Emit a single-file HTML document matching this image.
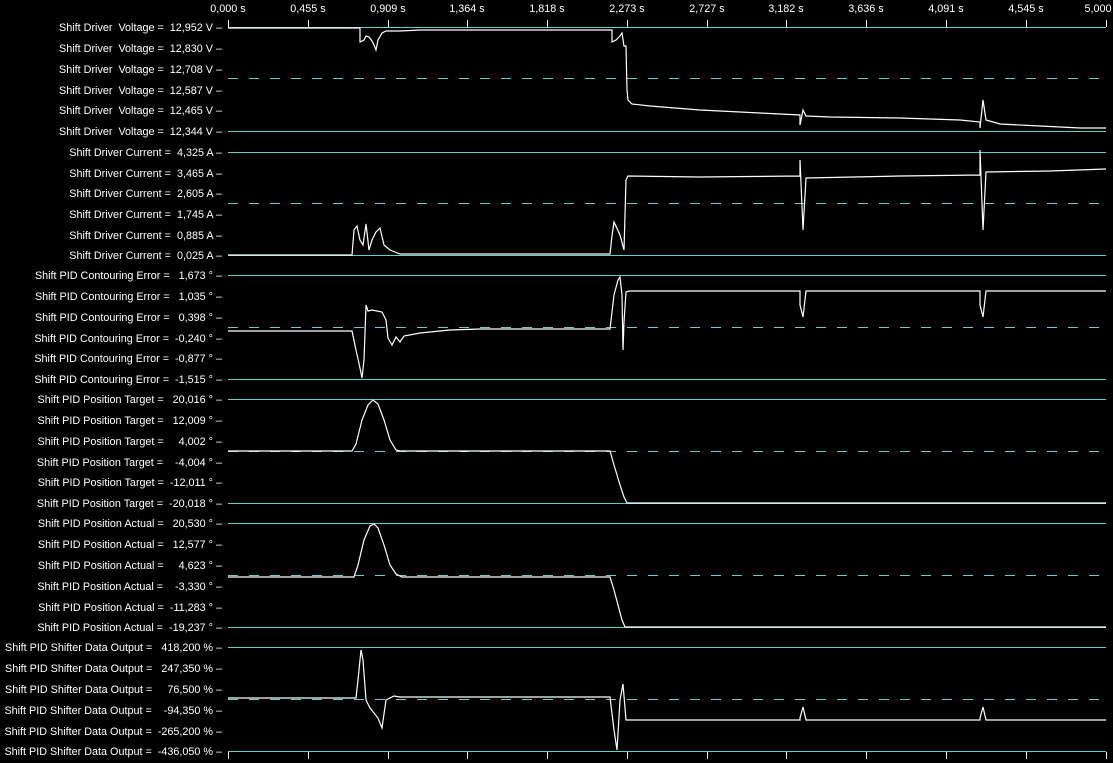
<!DOCTYPE html>
<html><head><meta charset="utf-8"><style>
html,body{margin:0;padding:0;background:#000;overflow:hidden;width:1113px;height:763px;position:relative}
svg{display:block;position:absolute;left:0;top:0}
text{font-family:"Liberation Sans",sans-serif;font-size:10.8px;fill:#fff;white-space:pre}
.l{position:absolute;left:228px;width:878px;height:1px;background:#66cccc}
.dl{position:absolute;left:228px;width:878px;height:1px;background:repeating-linear-gradient(90deg,#66cccc 0 10px,transparent 10px 21px)}
.w{stroke:#fff;stroke-width:1.2;fill:none}
.t{stroke:#fff;stroke-width:1}
</style></head><body>
<div class="l" style="top:27px"></div><div class="dl" style="top:78px"></div><div class="l" style="top:131px"></div>
<div class="l" style="top:152px"></div><div class="dl" style="top:203px"></div><div class="l" style="top:255px"></div>
<div class="l" style="top:275px"></div><div class="dl" style="top:327px"></div><div class="l" style="top:379px"></div>
<div class="l" style="top:399px"></div><div class="dl" style="top:451px"></div><div class="l" style="top:503px"></div>
<div class="l" style="top:523px"></div><div class="dl" style="top:575px"></div><div class="l" style="top:627px"></div>
<div class="l" style="top:647px"></div><div class="dl" style="top:699px"></div><div class="l" style="top:751px"></div>
<svg width="1113" height="763" viewBox="0 0 1113 763" xmlns="http://www.w3.org/2000/svg">
<g text-anchor="middle">
<text x="228" y="12">0,000 s</text><text x="308" y="12">0,455 s</text><text x="388" y="12">0,909 s</text>
<text x="467" y="12">1,364 s</text><text x="547" y="12">1,818 s</text><text x="627" y="12">2,273 s</text>
<text x="707" y="12">2,727 s</text><text x="786" y="12">3,182 s</text><text x="866" y="12">3,636 s</text>
<text x="946" y="12">4,091 s</text><text x="1026" y="12">4,545 s</text><text x="1098" y="12">5,000</text>
</g>
<g class="t">
<path d="M228.5 20V27M308.5 20V27M388.5 20V27M467.5 20V27M547.5 20V27M627.5 20V27M707.5 20V27M786.5 20V27M866.5 20V27M946.5 20V27M1026.5 20V27M1106.5 20V27"/>
<path d="M228.5 752V759M308.5 752V759M388.5 752V759M467.5 752V759M547.5 752V759M627.5 752V759M707.5 752V759M786.5 752V759M866.5 752V759M946.5 752V759M1026.5 752V759M1106.5 752V759"/>
</g>
<g text-anchor="end">
<text x="222" y="31">Shift Driver  Voltage =  12,952 V –</text>
<text x="222" y="52">Shift Driver  Voltage =  12,830 V –</text>
<text x="222" y="73">Shift Driver  Voltage =  12,708 V –</text>
<text x="222" y="94">Shift Driver  Voltage =  12,587 V –</text>
<text x="222" y="114">Shift Driver  Voltage =  12,465 V –</text>
<text x="222" y="135">Shift Driver  Voltage =  12,344 V –</text>
<text x="222" y="156">Shift Driver Current =  4,325 A –</text>
<text x="222" y="177">Shift Driver Current =  3,465 A –</text>
<text x="222" y="197">Shift Driver Current =  2,605 A –</text>
<text x="222" y="218">Shift Driver Current =  1,745 A –</text>
<text x="222" y="239">Shift Driver Current =  0,885 A –</text>
<text x="222" y="259">Shift Driver Current =  0,025 A –</text>
<text x="222" y="279">Shift PID Contouring Error =   1,673 ° –</text>
<text x="222" y="300">Shift PID Contouring Error =   1,035 ° –</text>
<text x="222" y="321">Shift PID Contouring Error =   0,398 ° –</text>
<text x="222" y="342">Shift PID Contouring Error =  -0,240 ° –</text>
<text x="222" y="362">Shift PID Contouring Error =  -0,877 ° –</text>
<text x="222" y="383">Shift PID Contouring Error =  -1,515 ° –</text>
<text x="222" y="403">Shift PID Position Target =   20,016 ° –</text>
<text x="222" y="424">Shift PID Position Target =   12,009 ° –</text>
<text x="222" y="445">Shift PID Position Target =     4,002 ° –</text>
<text x="222" y="466">Shift PID Position Target =    -4,004 ° –</text>
<text x="222" y="486">Shift PID Position Target =  -12,011 ° –</text>
<text x="222" y="507">Shift PID Position Target =  -20,018 ° –</text>
<text x="222" y="527">Shift PID Position Actual =   20,530 ° –</text>
<text x="222" y="548">Shift PID Position Actual =   12,577 ° –</text>
<text x="222" y="569">Shift PID Position Actual =     4,623 ° –</text>
<text x="222" y="590">Shift PID Position Actual =    -3,330 ° –</text>
<text x="222" y="611">Shift PID Position Actual =  -11,283 ° –</text>
<text x="222" y="631">Shift PID Position Actual =  -19,237 ° –</text>
<text x="222" y="651">Shift PID Shifter Data Output =   418,200 % –</text>
<text x="222" y="672">Shift PID Shifter Data Output =   247,350 % –</text>
<text x="222" y="693">Shift PID Shifter Data Output =     76,500 % –</text>
<text x="222" y="714">Shift PID Shifter Data Output =    -94,350 % –</text>
<text x="222" y="735">Shift PID Shifter Data Output =  -265,200 % –</text>
<text x="222" y="755">Shift PID Shifter Data Output =  -436,050 % –</text>
</g>
<g class="w">
<path d="M228 28H360V42L364 40L366 36L369 37L372 41L374 45L376 50L378 40L382 33L386 31H400L420 30H612V42L616 40L620 36L622 33L624 46L626 46L627 90L628 100L632 104L650 106L700 110L760 113L800 115V125L803 110L806 116L830 117L900 118L960 120L980 122V128L983 100L986 120L1000 124L1040 126L1080 128L1106 128"/>
<path d="M228 255H352L354 230L357 226L360 240L363 245L366 224L369 250L372 240L376 232L380 228L384 245L390 250L395 252L400 254H610L612 236L614 222L620 235L624 250L626 180L628 176L700 177L800 176V160L803 230L806 178L900 176L980 175V150L983 230L986 172L1050 171L1106 169"/>
<path d="M228 331H352L356 350L360 368L362 378L364 360L366 305L368 311L372 310L382 312L386 320L388 338L392 345L396 337L400 342L404 336L420 333L450 330L480 329H610L614 295L618 280L620 277L622 295L623 350L624 322L626 292L629 291H800V305L803 317L806 291H980V305L983 317L986 291H1106"/>
<path d="M228 451H352L356 444L362 420L368 405L373 400L378 404L384 420L390 440L396 450L400 451H610L614 465L620 485L624 497L627 503H1106"/>
<path d="M228 577H354L358 565L364 540L370 526L374 524L378 528L384 545L390 565L396 574L402 577H610L614 590L618 605L622 620L625 627H1106"/>
<path d="M228 698H356L358 680L361 650L363 660L366 700L370 708L378 718L382 728L386 700L394 696L400 697H610L614 730L617 750L620 700L623 684L626 720H800V718L803 707L806 720H980V718L983 707L986 720H1106"/>
</g>
</svg>
</body></html>
